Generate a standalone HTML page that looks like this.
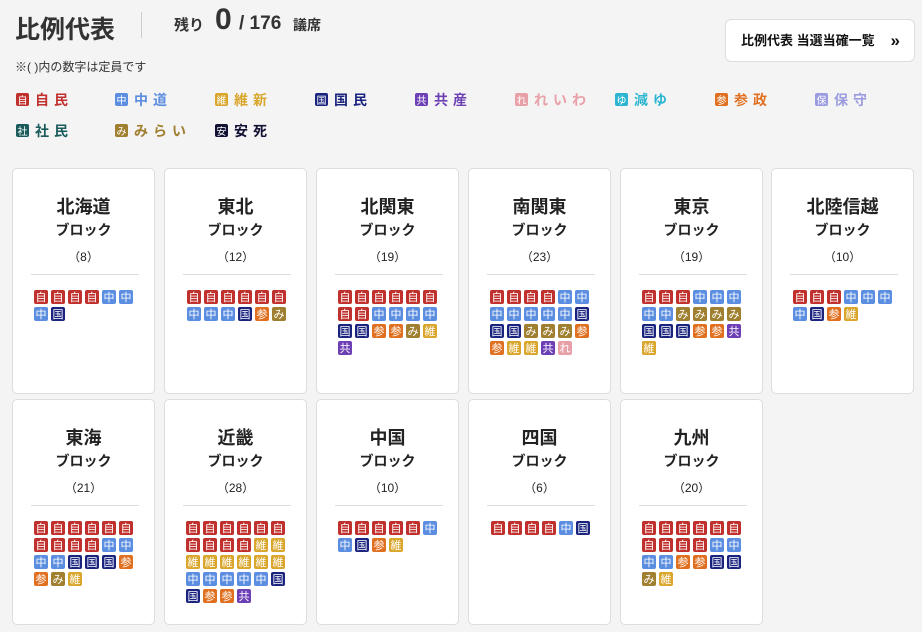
<!DOCTYPE html>
<html><head><meta charset="utf-8"><style>
*{margin:0;padding:0;box-sizing:border-box}
body{width:922px;height:632px;background:#f4f4f4;font-family:"Liberation Sans","Noto Sans CJK JP",sans-serif;color:#222;position:relative;overflow:hidden}
.abs{position:absolute;white-space:nowrap}
.b{display:inline-block;width:14px;height:14px;border-radius:2px;color:#fff;font-size:11px;line-height:14px;text-align:center;font-weight:normal;vertical-align:top;font-family:"Noto Sans CJK JP",sans-serif}
.lg{position:absolute;font-size:14px;font-weight:bold;letter-spacing:5px;white-space:nowrap;line-height:14px}
.lg .b{width:13px;height:13px;line-height:13px;font-size:10px;margin-right:6px;letter-spacing:0}
.card{position:absolute;width:143px;height:226px;background:#fff;border:1px solid #ddd;border-radius:5px;text-align:center}
.card h2{position:absolute;top:27px;left:0;right:0;font-size:18px;font-weight:bold;line-height:22px}
.card .s{position:absolute;top:52px;left:0;right:0;font-size:14px;font-weight:bold;line-height:18px}
.card .n{position:absolute;top:81px;left:0;right:0;font-size:12px;line-height:14px}
.card hr{position:absolute;top:105px;left:18px;width:108px;border:0;border-top:1px solid #ddd}
.card .bs{position:absolute;top:121px;left:21px;width:101px;display:flex;flex-wrap:wrap;justify-content:center;gap:3px}
.r{background:#c0302c}.c{background:#5b8de0}.i{background:#d9a52a}.k{background:#1a237e}.j{background:#6d3fb5}.re{background:#e8a0a8}.y{background:#2cb5d0}.sa{background:#e07020}.h{background:#9b9be0}.sh{background:#1a5a5a}.m{background:#a08030}.a{background:#111133}
</style></head><body>
<div class="abs" style="left:15px;top:10px;font-size:25px;font-weight:bold;color:#333">比例代表</div>
<div class="abs" style="left:141px;top:12px;width:1px;height:26px;background:#ccc"></div>
<div class="abs" style="left:174px;top:14px;font-size:15px;font-weight:bold;color:#333">残り</div>
<div class="abs" style="left:215px;top:3px;font-size:30px;font-weight:bold;color:#333">0</div>
<div class="abs" style="left:239px;top:13px;font-size:19px;font-weight:bold;color:#333">/ 176</div>
<div class="abs" style="left:293px;top:15px;font-size:14px;font-weight:bold;color:#333">議席</div>
<div class="abs" style="left:15px;top:58px;font-size:12px;color:#333">※( )内の数字は定員です</div>
<div class="abs" style="left:725px;top:19px;width:190px;height:43px;background:#fff;border:1px solid #ddd;border-radius:6px;font-size:13px;font-weight:bold;line-height:41px;padding-left:15px;color:#111">比例代表 当選当確一覧<span style="position:absolute;right:14px;font-size:17px">»</span></div>

<div class="lg" style="left:16px;top:93px;color:#c0302c"><span class="b r">自</span>自民</div>
<div class="lg" style="left:115px;top:93px;color:#5b8de0"><span class="b c">中</span>中道</div>
<div class="lg" style="left:215px;top:93px;color:#d9a52a"><span class="b i">維</span>維新</div>
<div class="lg" style="left:315px;top:93px;color:#1a237e"><span class="b k">国</span>国民</div>
<div class="lg" style="left:415px;top:93px;color:#6d3fb5"><span class="b j">共</span>共産</div>
<div class="lg" style="left:515px;top:93px;color:#e8a0a8"><span class="b re">れ</span>れいわ</div>
<div class="lg" style="left:615px;top:93px;color:#2cb5d0"><span class="b y">ゆ</span>減ゆ</div>
<div class="lg" style="left:715px;top:93px;color:#e07020"><span class="b sa">参</span>参政</div>
<div class="lg" style="left:815px;top:93px;color:#9b9be0"><span class="b h">保</span>保守</div>
<div class="lg" style="left:16px;top:124px;color:#1a5a5a"><span class="b sh">社</span>社民</div>
<div class="lg" style="left:115px;top:124px;color:#a08030"><span class="b m">み</span>みらい</div>
<div class="lg" style="left:215px;top:124px;color:#111133"><span class="b a">安</span>安死</div>

<div class="card" style="left:12px;top:168px"><h2>北海道</h2><div class="s">ブロック</div><div class="n">（8）</div><hr><div class="bs" style="justify-content:flex-start"><span class="b r">自</span><span class="b r">自</span><span class="b r">自</span><span class="b r">自</span><span class="b c">中</span><span class="b c">中</span><span class="b c">中</span><span class="b k">国</span></div></div>
<div class="card" style="left:164px;top:168px"><h2>東北</h2><div class="s">ブロック</div><div class="n">（12）</div><hr><div class="bs"><span class="b r">自</span><span class="b r">自</span><span class="b r">自</span><span class="b r">自</span><span class="b r">自</span><span class="b r">自</span><span class="b c">中</span><span class="b c">中</span><span class="b c">中</span><span class="b k">国</span><span class="b sa">参</span><span class="b m">み</span></div></div>
<div class="card" style="left:316px;top:168px"><h2>北関東</h2><div class="s">ブロック</div><div class="n">（19）</div><hr><div class="bs" style="justify-content:flex-start"><span class="b r">自</span><span class="b r">自</span><span class="b r">自</span><span class="b r">自</span><span class="b r">自</span><span class="b r">自</span><span class="b r">自</span><span class="b r">自</span><span class="b c">中</span><span class="b c">中</span><span class="b c">中</span><span class="b c">中</span><span class="b k">国</span><span class="b k">国</span><span class="b sa">参</span><span class="b sa">参</span><span class="b m">み</span><span class="b i">維</span><span class="b j">共</span></div></div>
<div class="card" style="left:468px;top:168px"><h2>南関東</h2><div class="s">ブロック</div><div class="n">（23）</div><hr><div class="bs" style="justify-content:flex-start"><span class="b r">自</span><span class="b r">自</span><span class="b r">自</span><span class="b r">自</span><span class="b c">中</span><span class="b c">中</span><span class="b c">中</span><span class="b c">中</span><span class="b c">中</span><span class="b c">中</span><span class="b c">中</span><span class="b k">国</span><span class="b k">国</span><span class="b k">国</span><span class="b m">み</span><span class="b m">み</span><span class="b m">み</span><span class="b sa">参</span><span class="b sa">参</span><span class="b i">維</span><span class="b i">維</span><span class="b j">共</span><span class="b re">れ</span></div></div>
<div class="card" style="left:620px;top:168px"><h2>東京</h2><div class="s">ブロック</div><div class="n">（19）</div><hr><div class="bs" style="justify-content:flex-start"><span class="b r">自</span><span class="b r">自</span><span class="b r">自</span><span class="b c">中</span><span class="b c">中</span><span class="b c">中</span><span class="b c">中</span><span class="b c">中</span><span class="b m">み</span><span class="b m">み</span><span class="b m">み</span><span class="b m">み</span><span class="b k">国</span><span class="b k">国</span><span class="b k">国</span><span class="b sa">参</span><span class="b sa">参</span><span class="b j">共</span><span class="b i">維</span></div></div>
<div class="card" style="left:771px;top:168px"><h2>北陸信越</h2><div class="s">ブロック</div><div class="n">（10）</div><hr><div class="bs" style="justify-content:flex-start"><span class="b r">自</span><span class="b r">自</span><span class="b r">自</span><span class="b c">中</span><span class="b c">中</span><span class="b c">中</span><span class="b c">中</span><span class="b k">国</span><span class="b sa">参</span><span class="b i">維</span></div></div>

<div class="card" style="left:12px;top:399px"><h2>東海</h2><div class="s">ブロック</div><div class="n">（21）</div><hr><div class="bs" style="justify-content:flex-start"><span class="b r">自</span><span class="b r">自</span><span class="b r">自</span><span class="b r">自</span><span class="b r">自</span><span class="b r">自</span><span class="b r">自</span><span class="b r">自</span><span class="b r">自</span><span class="b r">自</span><span class="b c">中</span><span class="b c">中</span><span class="b c">中</span><span class="b c">中</span><span class="b k">国</span><span class="b k">国</span><span class="b k">国</span><span class="b sa">参</span><span class="b sa">参</span><span class="b m">み</span><span class="b i">維</span></div></div>
<div class="card" style="left:164px;top:399px"><h2>近畿</h2><div class="s">ブロック</div><div class="n">（28）</div><hr><div class="bs" style="justify-content:flex-start"><span class="b r">自</span><span class="b r">自</span><span class="b r">自</span><span class="b r">自</span><span class="b r">自</span><span class="b r">自</span><span class="b r">自</span><span class="b r">自</span><span class="b r">自</span><span class="b r">自</span><span class="b i">維</span><span class="b i">維</span><span class="b i">維</span><span class="b i">維</span><span class="b i">維</span><span class="b i">維</span><span class="b i">維</span><span class="b i">維</span><span class="b c">中</span><span class="b c">中</span><span class="b c">中</span><span class="b c">中</span><span class="b c">中</span><span class="b k">国</span><span class="b k">国</span><span class="b sa">参</span><span class="b sa">参</span><span class="b j">共</span></div></div>
<div class="card" style="left:316px;top:399px"><h2>中国</h2><div class="s">ブロック</div><div class="n">（10）</div><hr><div class="bs" style="justify-content:flex-start"><span class="b r">自</span><span class="b r">自</span><span class="b r">自</span><span class="b r">自</span><span class="b r">自</span><span class="b c">中</span><span class="b c">中</span><span class="b k">国</span><span class="b sa">参</span><span class="b i">維</span></div></div>
<div class="card" style="left:468px;top:399px"><h2>四国</h2><div class="s">ブロック</div><div class="n">（6）</div><hr><div class="bs"><span class="b r">自</span><span class="b r">自</span><span class="b r">自</span><span class="b r">自</span><span class="b c">中</span><span class="b k">国</span></div></div>
<div class="card" style="left:620px;top:399px"><h2>九州</h2><div class="s">ブロック</div><div class="n">（20）</div><hr><div class="bs" style="justify-content:flex-start"><span class="b r">自</span><span class="b r">自</span><span class="b r">自</span><span class="b r">自</span><span class="b r">自</span><span class="b r">自</span><span class="b r">自</span><span class="b r">自</span><span class="b r">自</span><span class="b r">自</span><span class="b c">中</span><span class="b c">中</span><span class="b c">中</span><span class="b c">中</span><span class="b sa">参</span><span class="b sa">参</span><span class="b k">国</span><span class="b k">国</span><span class="b m">み</span><span class="b i">維</span></div></div>
</body></html>
